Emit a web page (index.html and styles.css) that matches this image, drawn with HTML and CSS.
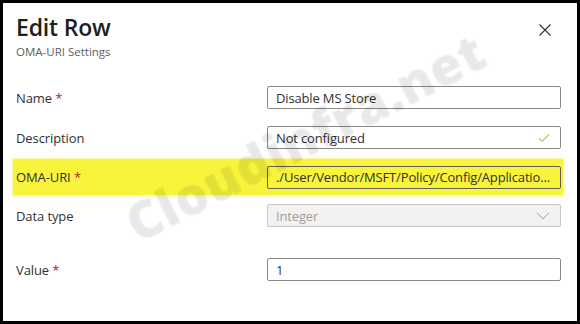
FILE: index.html
```html
<!DOCTYPE html>
<html>
<head>
<meta charset="utf-8">
<link rel="stylesheet" href="styles.css">
</head>
<body>
<div class="panel">
  <header class="head">
    <div class="titles">
      <h1 class="title">Edit Row</h1>
      <div class="subtitle">OMA-URI Settings</div>
    </div>
    <button class="close" aria-label="Close">
      <svg width="12" height="12" viewBox="0 0 12 12"><path d="M0.5 0.5 L11.5 11.5 M11.5 0.5 L0.5 11.5" stroke="#323130" stroke-width="1.1" fill="none"/></svg>
    </button>
  </header>
  <div class="form">
    <div class="row r-name">
      <label class="lbl">Name <span class="req">*</span></label>
      <div class="field"><span class="val">Disable MS Store</span></div>
    </div>
    <div class="row r-desc">
      <label class="lbl">Description</label>
      <div class="field"><span class="val">Not configured</span>
        <svg class="ico" width="12" height="10" viewBox="0 0 12 10"><path d="M0.8 5.2 L4.2 8.4 L11.2 1.2" stroke="#6bb700" stroke-width="1" fill="none"/></svg>
      </div>
    </div>
    <div class="row r-uri hl">
      <label class="lbl">OMA-URI <span class="req">*</span></label>
      <div class="field"><span class="val">./User/Vendor/MSFT/Policy/Config/Applicatio...</span></div>
    </div>
    <div class="row r-type">
      <label class="lbl">Data type</label>
      <div class="field disabled"><span class="val">Integer</span>
        <svg class="ico" width="14" height="8" viewBox="0 0 14 8"><path d="M0.8 0.8 L7 6.8 L13.2 0.8" stroke="#a19f9d" stroke-width="1" fill="none"/></svg>
      </div>
    </div>
    <div class="row r-value">
      <label class="lbl">Value <span class="req">*</span></label>
      <div class="field"><span class="val">1</span></div>
    </div>
  </div>
  <div class="watermark">Cloudinfra.net</div>
</div>
</body>
</html>
```

FILE: styles.css
```css
html, body {
  margin: 0;
  padding: 0;
  background: #000;
}
body {
  padding: 3px;
  width: 580px;
  height: 324px;
  box-sizing: border-box;
  font-family: "Open Sans", "Noto Sans", sans-serif;
}
.panel {
  position: relative;
  overflow: hidden;
  background: #fff;
  width: 574px;
  height: 318px;
  box-sizing: border-box;
  padding: 0 16px 0 13px;
}
.head {
  display: flex;
  justify-content: space-between;
  align-items: flex-start;
  padding-top: 9px;
}
.title {
  margin: 0;
  font-size: 23px;
  font-weight: 600;
  line-height: 30px;
  color: #201f1e;
  letter-spacing: -0.2px;
}
.subtitle {
  font-size: 11.5px;
  line-height: 16px;
  color: #605e5c;
  margin-top: 2px;
}
.close {
  border: 0;
  background: none;
  padding: 0;
  margin: 12px 10px 0 0;
  width: 12px;
  height: 12px;
  display: flex;
}
.form {
  margin-top: 26px;
  display: flex;
  flex-direction: column;
}
.row {
  display: flex;
  align-items: center;
  height: 23px;
  margin-left: -3px;
  padding-left: 3px;
  margin-right: -2px;
  padding-right: 2px;
}
.r-desc { margin-top: 17px; }
.r-uri { margin-top: 10px; height: 36px; }
.r-type { margin-top: 9px; }
.r-value { margin-top: 31px; }
.hl {
  background: #f8f43c;
  box-shadow: 0 0 2px 1px rgba(248, 244, 60, 0.6);
}
.lbl {
  flex: 1;
  font-size: 13px;
  color: #323130;
  letter-spacing: -0.1px;
}
.req { color: #a4262c; }
.field {
  width: 294px;
  height: 23px;
  box-sizing: border-box;
  border: 1px solid #8a8886;
  border-radius: 2px;
  display: flex;
  align-items: center;
  justify-content: space-between;
  padding: 0 10px 0 8px;
  font-size: 13px;
  color: #323130;
  letter-spacing: -0.15px;
}
.hl .field { border-color: #605e5c; }
.field.disabled {
  background: #f3f2f1;
  border-color: #c8c6c4;
  color: #a19f9d;
}
.val { white-space: nowrap; }
.watermark {
  position: absolute;
  left: 126px;
  top: 188px;
  font-size: 52px;
  line-height: 70px;
  font-weight: 800;
  color: rgba(0, 0, 0, 0.05);
  transform: rotate(-27deg);
  transform-origin: left center;
  white-space: nowrap;
  letter-spacing: 0.5px;
  text-shadow: 0 0 3px rgba(0, 0, 0, 0.04);
  pointer-events: none;
}
```
